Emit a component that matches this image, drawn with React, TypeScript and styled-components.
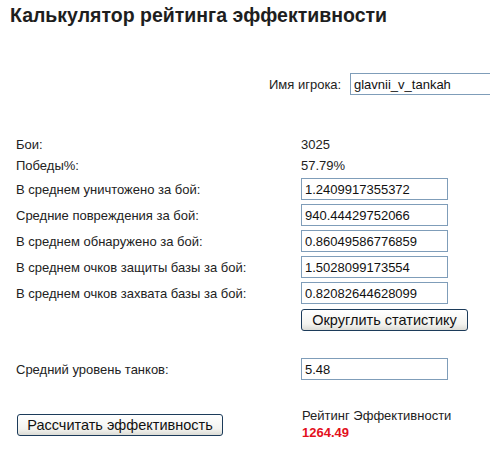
import React from "react";
import styled, { createGlobalStyle } from "styled-components";

const stats = [
  { label: "В среднем уничтожено за бой:", value: "1.2409917355372" },
  { label: "Средние повреждения за бой:", value: "940.44429752066" },
  { label: "В среднем обнаружено за бой:", value: "0.86049586776859" },
  { label: "В среднем очков защиты базы за бой:", value: "1.5028099173554" },
  { label: "В среднем очков захвата базы за бой:", value: "0.82082644628099" },
];

const App = () => {
  return (
    <>
      <GlobalStyle />
      <SPage>
        <h1 className="title">Калькулятор рейтинга эффективности</h1>
        <div className="player">
          <span className="player-label">Имя игрока:</span>
          <SInput $wide defaultValue="glavnii_v_tankah" />
        </div>

        <div className="stats">
          <STextRow>
            <span className="label">Бои:</span>
            <span>3025</span>
          </STextRow>
          <STextRow>
            <span className="label">Победы%:</span>
            <span>57.79%</span>
          </STextRow>
          {stats.map((s) => (
            <SFieldRow key={s.label}>
              <span className="label">{s.label}</span>
              <SInput defaultValue={s.value} />
            </SFieldRow>
          ))}
          <SFieldRow>
            <span className="label" />
            <SButton $width={167}>Округлить статистику</SButton>
          </SFieldRow>
        </div>

        <div className="level">
          <SFieldRow>
            <span className="label">Средний уровень танков:</span>
            <SInput defaultValue="5.48" />
          </SFieldRow>
        </div>

        <div className="result">
          <div className="calc">
            <SButton $width={206}>Рассчитать эффективность</SButton>
          </div>
          <div className="rating">
            <div>Рейтинг Эффективности</div>
            <div className="rating-value">1264.49</div>
          </div>
        </div>
      </SPage>
    </>
  );
};

export default App;

const GlobalStyle = createGlobalStyle`
  body {
    margin: 0;
    background: #fff;
    font-family: "Liberation Sans", Arial, sans-serif;
    font-size: 13px;
    color: #222;
  }
`;

const SPage = styled.div`
  width: 490px;
  height: 451px;
  overflow: hidden;
  .title {
    margin: 0;
    padding: 4px 0 0 10px;
    font-size: 19.5px;
    line-height: 22px;
    font-weight: bold;
    color: #1e1e1e;
    white-space: nowrap;
  }
  .player {
    display: flex;
    align-items: center;
    margin-top: 47px;
    padding-left: 269px;
    white-space: nowrap;
    .player-label {
      flex-shrink: 0;
      width: 81px;
    }
    input {
      flex-shrink: 0;
    }
  }
  .stats {
    margin-top: 39px;
    padding-left: 16px;
  }
  .level {
    margin-top: 24px;
    padding-left: 16px;
  }
  .result {
    display: flex;
    align-items: center;
    margin-top: 25px;
    padding-left: 17px;
    .calc {
      width: 285px;
    }
    .rating {
      line-height: 17px;
      .rating-value {
        color: #e3101c;
        font-weight: bold;
      }
    }
  }
`;

const STextRow = styled.div`
  display: flex;
  align-items: center;
  height: 21px;
  white-space: nowrap;
  .label {
    width: 285px;
  }
`;

const SFieldRow = styled.div`
  display: flex;
  align-items: center;
  height: 26px;
  white-space: nowrap;
  .label {
    width: 285px;
  }
`;

const SInput = styled.input<{ $wide?: boolean }>`
  box-sizing: border-box;
  width: ${(p) => (p.$wide ? "160px" : "147px")};
  height: 22px;
  padding: 0 3px;
  border: 1px solid #7f9db9;
  font-family: "Liberation Sans", Arial, sans-serif;
  font-size: 13px;
  color: #111;
  background: #fff;
  outline: none;
`;

const SButton = styled.button<{ $width: number }>`
  box-sizing: border-box;
  width: ${(p) => p.$width}px;
  height: 22px;
  margin-top: 2px;
  padding: 0 4px;
  border: 1px solid #1c3b5a;
  border-radius: 3px;
  background: linear-gradient(#ffffff, #f3f3ef 70%, #dcdcd6);
  font-family: "Liberation Sans", Arial, sans-serif;
  font-size: 14.5px;
  color: #111;
  white-space: nowrap;
  cursor: pointer;
`;
